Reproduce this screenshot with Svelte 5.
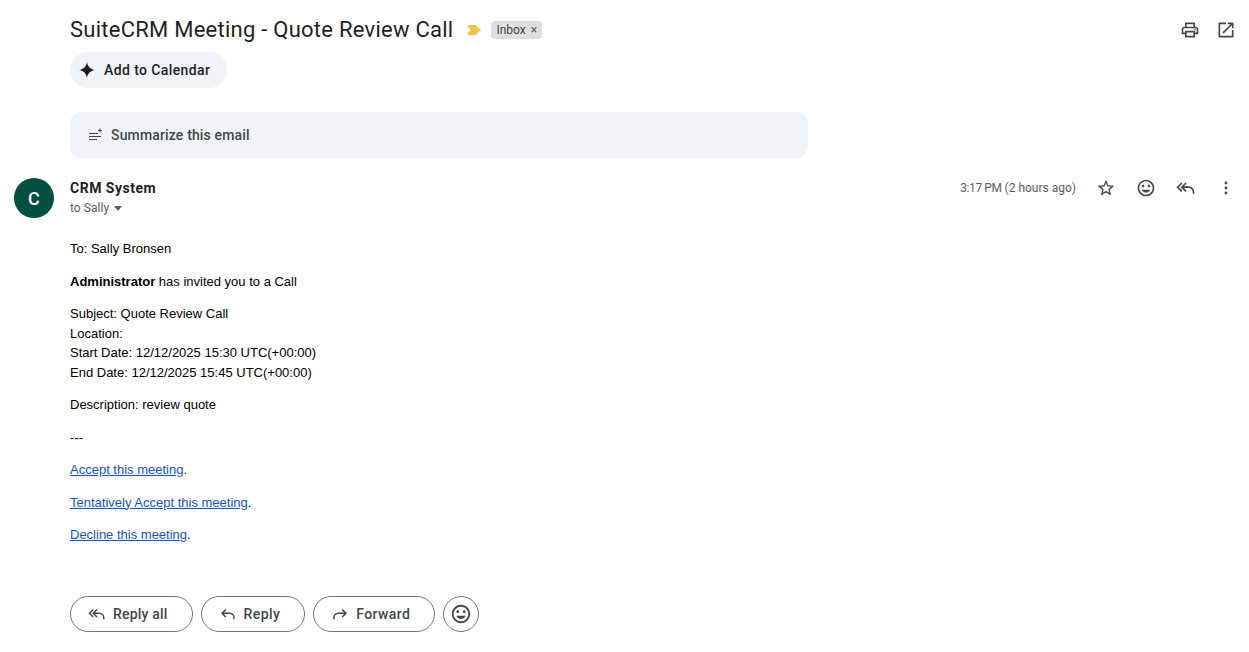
<script>
  const recipients = "to Sally";
</script>

<div class="mail">
  <header class="subject-row">
    <div class="subject">
      <h1>SuiteCRM Meeting - Quote Review Call</h1>
      <svg class="marker" width="14" height="10" viewBox="0 0 14 10"><path d="M0 0h8.5L14 5l-5.500 5H0l3.500-5z" fill="#f6c344" /></svg>
      <span class="chip">Inbox <span class="chip-x">×</span></span>
    </div>
    <div class="top-icons">
      <svg width="20" height="20" viewBox="0 0 24 24"><path d="M19 8h-1V3H6v5H5c-1.660 0-3 1.340-3 3v6h4v4h12v-4h4v-6c0-1.660-1.340-3-3-3zM8 5h8v3H8V5zm8 14H8v-4h8v4zm4-4h-2v-2H6v2H4v-4c0-.55.45-1 1-1h14c.55 0 1 .45 1 1v4z" fill="#444746"/><circle cx="18" cy="11.500" r="1" fill="#444746"/></svg>
      <svg width="20" height="20" viewBox="0 0 24 24"><path d="M19 19H5V5h7V3H3v18h18v-9h-2v7zM14 3v2h3.590l-9.830 9.830 1.410 1.410L19 6.410V10h2V3h-7z" fill="#444746"/></svg>
    </div>
  </header>

  <button class="calendar">
    <svg width="18" height="18" viewBox="0 0 18 18"><path d="M9 1c.7 4.600 3.400 7.300 8 8-4.600.7-7.300 3.400-8 8-.7-4.600-3.400-7.300-8-8 4.600-.7 7.300-3.400 8-8z" fill="#1f1f1f"/></svg>
    Add to Calendar
  </button>

  <button class="summary">
    <svg width="16" height="16" viewBox="0 0 16 16" fill="none" stroke="#444746" stroke-width="1.100"><path d="M1 6.500h9M1 9.500h12M1 12.500h8"/><path d="M12 1.500v4M10 3.500h4"/></svg>
    Summarize this email
  </button>

  <section class="message">
    <div class="avatar">C</div>
    <div class="content">
      <div class="meta">
        <div class="sender">
          <div class="name">CRM System</div>
          <div class="to">{recipients} <span class="caret"></span></div>
        </div>
        <div class="actions">
          <span class="time"><span class="clock">3:17 PM</span> (2 hours ago)</span>
          <svg width="20" height="20" viewBox="0 0 24 24"><path d="M22 9.240l-7.190-.62L12 2 9.190 8.630 2 9.240l5.460 4.730L5.820 21 12 17.270 18.180 21l-1.630-7.030L22 9.240zM12 15.400l-3.760 2.270 1-4.280-3.320-2.880 4.380-.38L12 6.100l1.710 4.040 4.380.38-3.320 2.880 1 4.280L12 15.400z" fill="#444746"/></svg>
          <svg width="20" height="20" viewBox="0 0 24 24"><path d="M11.990 2C6.470 2 2 6.480 2 12s4.470 10 9.990 10C17.520 22 22 17.520 22 12S17.520 2 11.990 2zM12 20c-4.420 0-8-3.580-8-8s3.580-8 8-8 8 3.580 8 8-3.580 8-8 8zm3.500-9c.83 0 1.500-.67 1.500-1.500S16.330 8 15.500 8 14 8.670 14 9.500s.67 1.500 1.500 1.500zm-7 0c.83 0 1.500-.67 1.500-1.500S9.330 8 8.500 8 7 8.670 7 9.500 7.670 11 8.500 11zm3.500 6.500c2.330 0 4.310-1.460 5.110-3.500H6.890c.8 2.040 2.780 3.500 5.110 3.500z" fill="#444746"/></svg>
          <svg width="20" height="20" viewBox="0 0 24 24" fill="none" stroke="#444746" stroke-width="2"><path d="M7 6l-5 5 5 5M12 6l-5 5 5 5M7 11h8a6 6 0 0 1 6 6v2"/></svg>
          <svg class="more" width="20" height="20" viewBox="0 0 24 24" fill="#444746"><circle cx="12" cy="6" r="1.700"/><circle cx="12" cy="12" r="1.700"/><circle cx="12" cy="18" r="1.700"/></svg>
        </div>
      </div>

      <div class="body">
        <p>To: Sally Bronsen</p>
        <p><b>Administrator</b> has invited you to a Call</p>
        <p>Subject: Quote Review Call<br />Location:<br />Start Date: 12/12/2025 15:30 UTC(+00:00)<br />End Date: 12/12/2025 15:45 UTC(+00:00)</p>
        <p>Description: review quote</p>
        <p>---</p>
        <p><a href="#accept">Accept this meeting</a>.</p>
        <p><a href="#tentative">Tentatively Accept this meeting</a>.</p>
        <p><a href="#decline">Decline this meeting</a>.</p>
      </div>

      <div class="reply-row">
        <button class="pill all">
          <svg width="18" height="18" viewBox="0 0 24 24" fill="none" stroke="#444746" stroke-width="2"><path d="M7 6l-5 5 5 5M12 6l-5 5 5 5M7 11h8a6 6 0 0 1 6 6v2"/></svg>
          Reply all
        </button>
        <button class="pill">
          <svg width="18" height="18" viewBox="0 0 24 24" fill="none" stroke="#444746" stroke-width="2"><path d="M9 6l-5 5 5 5M4 11h10a6 6 0 0 1 6 6v2"/></svg>
          Reply
        </button>
        <button class="pill">
          <svg width="18" height="18" viewBox="0 0 24 24" fill="none" stroke="#444746" stroke-width="2"><path d="M15 6l5 5-5 5M20 11H10a6 6 0 0 0-6 6v2"/></svg>
          Forward
        </button>
        <button class="pill round">
          <svg width="22" height="22" viewBox="0 0 24 24"><path d="M11.990 2C6.470 2 2 6.480 2 12s4.470 10 9.990 10C17.520 22 22 17.520 22 12S17.520 2 11.990 2zM12 20c-4.420 0-8-3.580-8-8s3.580-8 8-8 8 3.580 8 8-3.580 8-8 8zm3.500-9c.83 0 1.500-.67 1.500-1.500S16.330 8 15.500 8 14 8.670 14 9.500s.67 1.500 1.500 1.500zm-7 0c.83 0 1.500-.67 1.500-1.500S9.330 8 8.500 8 7 8.670 7 9.500 7.670 11 8.500 11zm3.500 6.500c2.330 0 4.310-1.460 5.110-3.500H6.890c.8 2.040 2.780 3.500 5.110 3.500z" fill="#444746"/></svg>
        </button>
      </div>
    </div>
  </section>
</div>

<style>
  :global(body) {
    margin: 0;
    background: #fff;
    color: #1f1f1f;
    font-family: "Roboto", "Liberation Sans", sans-serif;
  }

  svg {
    display: block;
    flex: none;
  }

  .mail {
    padding: 14px 13px 20px 14px;
  }

  .subject-row {
    display: flex;
    justify-content: space-between;
    align-items: center;
    padding-left: 56px;
    height: 32px;
  }

  .subject {
    display: flex;
    align-items: center;
  }

  h1 {
    margin: 0;
    font-size: 22px;
    font-weight: 400;
    line-height: 32px;
    letter-spacing: 0.25px;
  }

  .marker {
    margin-left: 14px;
  }

  .chip {
    margin-left: 10px;
    padding: 0 5px;
    height: 18px;
    line-height: 18px;
    font-size: 12px;
    color: #444746;
    background: #dddfe0;
    border-radius: 4px;
  }

  .chip-x {
    margin-left: 2px;
    color: #5e5e5e;
  }

  .top-icons {
    display: flex;
    gap: 16px;
  }

  .calendar {
    display: flex;
    align-items: center;
    gap: 8px;
    margin: 6px 0 0 56px;
    padding: 0 17px 0 8px;
    height: 36px;
    border: 0;
    border-radius: 18px;
    background: #f0f4f9;
    color: #1f1f1f;
    font: 500 14px "Roboto", sans-serif;
    letter-spacing: 0.4px;
  }

  .summary {
    display: flex;
    align-items: center;
    gap: 7px;
    margin: 24px 0 0 56px;
    padding: 0 0 0 18px;
    width: 738px;
    height: 46px;
    border: 0;
    border-radius: 12px;
    background: #f0f4f9;
    color: #444746;
    font: 500 14px "Roboto", sans-serif;
    letter-spacing: 0.15px;
    text-align: left;
  }

  .message {
    display: flex;
    gap: 16px;
    margin-top: 20px;
  }

  .avatar {
    flex: none;
    width: 40px;
    height: 40px;
    border-radius: 50%;
    background: #004f3f;
    color: #fff;
    font: 500 18px/41px "Roboto", sans-serif;
    text-align: center;
  }

  .content {
    flex: 1;
  }

  .meta {
    display: flex;
    justify-content: space-between;
    align-items: flex-start;
  }

  .name {
    font-size: 14px;
    font-weight: 700;
    line-height: 20px;
    letter-spacing: 0.5px;
  }

  .to {
    margin-top: 1px;
    display: flex;
    align-items: center;
    gap: 5px;
    font-size: 12px;
    line-height: 18px;
    color: #5e5e5e;
    letter-spacing: 0.05px;
  }

  .caret {
    margin-top: 1px;
    border: 4px solid transparent;
    border-top: 5px solid #5e5e5e;
    border-bottom: 0;
  }

  .actions {
    display: flex;
    align-items: center;
    gap: 20px;
  }

  .time {
    font-size: 12px;
    line-height: 20px;
    color: #5e5e5e;
  }

  .clock {
    letter-spacing: -0.4px;
  }

  .body {
    margin-top: 22px;
    font: 13px/19.500px "Liberation Sans", Arial, sans-serif;
    color: #000;
  }

  .body p {
    margin: 0 0 13px;
  }

  .body a {
    color: #1155cc;
  }

  .reply-row {
    display: flex;
    gap: 8px;
    margin-top: 51px;
  }

  .pill {
    display: flex;
    align-items: center;
    gap: 7px;
    height: 36px;
    padding: 0 24px 0 17px;
    border: 1px solid #747775;
    border-radius: 18px;
    background: #fff;
    color: #444746;
    font: 500 14px "Roboto", sans-serif;
    letter-spacing: 0.4px;
  }

  .all {
    letter-spacing: 0.2px;
  }

  .round {
    justify-content: center;
    padding: 0;
    width: 36px;
  }
</style>
